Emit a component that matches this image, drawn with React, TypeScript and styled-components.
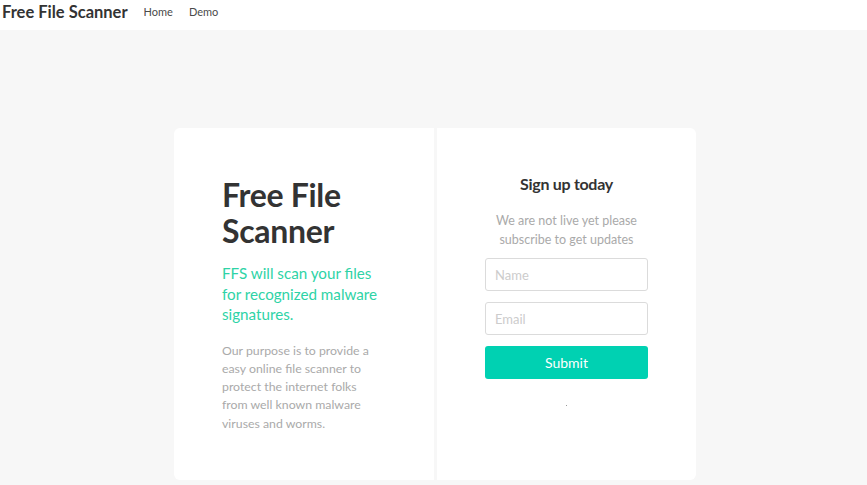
import React from "react";
import styled, { createGlobalStyle } from "styled-components";

const Global = createGlobalStyle`
  html, body { margin: 0; padding: 0; background: #f7f7f7; }
  body { font-family: "Lato", "Noto Sans", sans-serif; color: #333; }
  * { box-sizing: border-box; }
`;

const Page = styled.div`
  min-height: 485px;
  background: #f7f7f7;
`;

const Navbar = styled.nav`
  height: 30px;
  background: #fff;
  display: flex;
  align-items: flex-start;
  padding: 3px 0 0 2px;
`;

const Brand = styled.div`
  font-weight: 700;
  font-size: 16.5px;
  line-height: 19px;
  color: #333;
  margin-right: 16px;
`;

const NavLink = styled.a`
  font-size: 11px;
  line-height: 18px;
  color: #4a4a4a;
  margin-right: 16px;
  text-decoration: none;
`;

const Main = styled.main`
  display: flex;
  justify-content: center;
  padding: 98px 0 0 3px;
`;

const Card = styled.div`
  display: flex;
  gap: 3px;
  width: 522px;
  height: 352px;
`;

const Panel = styled.section<{ $side: "left" | "right" }>`
  flex: 0 0 ${(p) => (p.$side === "left" ? "260px" : "259px")};
  min-width: 0;
  background: #fff;
  border-radius: ${(p) => (p.$side === "left" ? "6px 0 0 6px" : "0 6px 6px 0")};
`;

const LeftPanel = styled(Panel)`
  padding: 49px 20px 0 48px;
`;

const RightPanel = styled(Panel)`
  padding: 46px 0 0 0;
  display: flex;
  flex-direction: column;
  align-items: center;
`;

const Title = styled.h1`
  margin: 0;
  font-size: 32px;
  line-height: 36px;
  font-weight: 700;
  color: #333;
  letter-spacing: -0.3px;
`;

const Lead = styled.p`
  margin: 14px 0 0;
  font-size: 15.2px;
  line-height: 20.5px;
  color: #2ed3a6;
  width: 170px;
`;

const Body = styled.p`
  margin: 17px 0 0;
  font-size: 12.3px;
  line-height: 18.3px;
  color: #aaa;
  width: 160px;
`;

const FormTitle = styled.h2`
  margin: 0;
  font-size: 16px;
  font-weight: 700;
  color: #333;
  letter-spacing: -0.3px;
`;

const FormText = styled.p`
  margin: 18px 0 0;
  font-size: 12.5px;
  line-height: 19px;
  color: #aaa;
  text-align: center;
`;

const Form = styled.form`
  margin-top: 9px;
  display: flex;
  flex-direction: column;
  gap: 11px;
  width: 163px;
`;

const Input = styled.input`
  height: 33px;
  width: 100%;
  border: 1px solid #dbdbdb;
  border-radius: 3px;
  padding: 0 9px;
  font-family: inherit;
  font-size: 13px;
  color: #333;
  outline: none;
  &::placeholder { color: #ccc; }
`;

const Submit = styled.button`
  height: 33px;
  width: 100%;
  border: none;
  border-radius: 3px;
  background: #00d1b2;
  color: #fff;
  font-family: inherit;
  font-size: 14px;
  cursor: pointer;
`;

const Dot = styled.div`
  margin-top: 26px;
  width: 1px;
  height: 1px;
  background: #999;
`;

export default function App() {
  return (
    <Page>
      <Global />
      <Navbar>
        <Brand>Free File Scanner</Brand>
        <NavLink href="#">Home</NavLink>
        <NavLink href="#">Demo</NavLink>
      </Navbar>
      <Main>
        <Card>
          <LeftPanel $side="left">
            <Title>
              Free File
              <br />
              Scanner
            </Title>
            <Lead>FFS will scan your files for recognized malware signatures.</Lead>
            <Body>
              Our purpose is to provide a easy online file scanner to protect the internet folks from well known
              malware viruses and worms.
            </Body>
          </LeftPanel>
          <RightPanel $side="right">
            <FormTitle>Sign up today</FormTitle>
            <FormText>
              We are not live yet please
              <br />
              subscribe to get updates
            </FormText>
            <Form onSubmit={(e) => e.preventDefault()}>
              <Input placeholder="Name" />
              <Input placeholder="Email" />
              <Submit type="submit">Submit</Submit>
            </Form>
            <Dot />
          </RightPanel>
        </Card>
      </Main>
    </Page>
  );
}
